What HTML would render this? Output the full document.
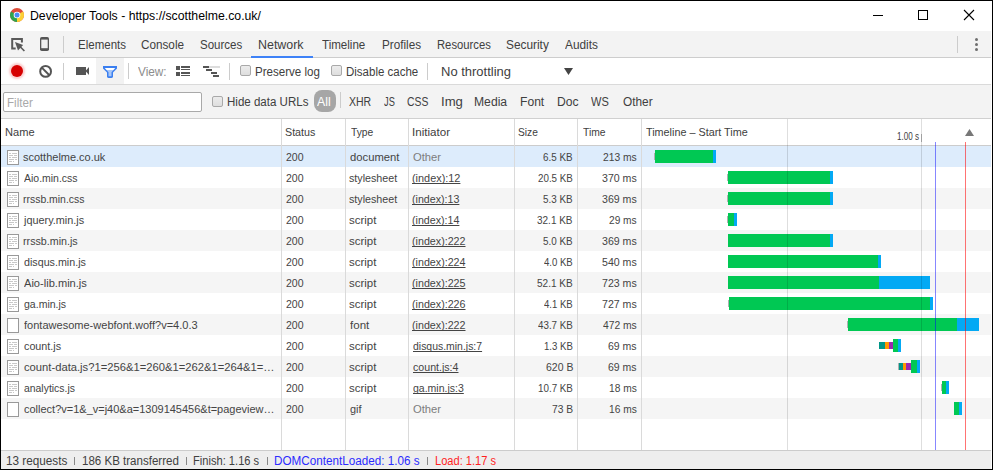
<!DOCTYPE html>
<html><head><meta charset="utf-8">
<style>
html,body{margin:0;padding:0;width:993px;height:470px;overflow:hidden;background:#fff;}
body{position:relative;font-family:"Liberation Sans",sans-serif;}
div,svg{position:absolute;box-sizing:border-box;}
.t{white-space:pre;line-height:16px;transform-origin:0 0;}
.r{left:1px;width:990px;height:21px;}
.bar{}
.ic{}
.vl{width:1px;}
.hl{height:1px;}
</style></head><body>
<!-- title bar -->
<div style="left:0;top:0;width:993px;height:31px;background:#fff"></div>
<svg style="left:10px;top:8px" width="14" height="14" viewBox="0 0 14 14">
  <circle cx="7" cy="7" r="7" fill="#dd4b39"/>
  <path d="M7 7 L13.06 3.5 A7 7 0 0 1 7 14 Z" fill="#fcd035"/>
  <path d="M7 7 L7 14 A7 7 0 0 1 0.94 3.5 Z" fill="#2fa44f"/>
  <circle cx="7" cy="7" r="3.3" fill="#fff"/>
  <circle cx="7" cy="7" r="2.5" fill="#4c8bf5"/>
</svg>
<!-- window controls -->
<div class="hl" style="left:873px;top:15px;width:10px;background:#000"></div>
<div style="left:918px;top:10px;width:10px;height:10px;border:1px solid #000"></div>
<svg style="left:963px;top:9px" width="12" height="12" viewBox="0 0 12 12"><path d="M1 1L11 11M11 1L1 11" stroke="#000" stroke-width="1.1"/></svg>

<!-- tab bar -->
<div style="left:1px;top:31px;width:990px;height:27px;background:#f3f3f3;border-bottom:1px solid #cdcdcd"></div>
<svg style="left:8px;top:34px" width="20" height="20" viewBox="0 0 20 20">
  <path d="M7.7 14.5H4.2V5H13.9V8.5" fill="none" stroke="#595959" stroke-width="2"/>
  <path d="M7 8L15.1 11L10 16.4Z" fill="#595959"/>
  <path d="M12 12.5L16.4 17" stroke="#595959" stroke-width="1.6"/>
</svg>
<svg style="left:40px;top:37px" width="9" height="14" viewBox="0 0 9 14"><rect x="0" y="0" width="9" height="14" rx="1.8" fill="#555"/><rect x="1.3" y="2.6" width="6.4" height="8.6" fill="#efefef"/></svg>
<div class="vl" style="left:63px;top:36px;height:17px;background:#ccc"></div>
<div class="hl" style="left:251px;top:56px;width:62px;height:2px;background:#3e82f7"></div>
<div class="vl" style="left:957px;top:36px;height:17px;background:#ccc"></div>
<div style="left:975px;top:38px;width:3px;height:3px;border-radius:50%;background:#6e6e6e"></div>
<div style="left:975px;top:43px;width:3px;height:3px;border-radius:50%;background:#6e6e6e"></div>
<div style="left:975px;top:48px;width:3px;height:3px;border-radius:50%;background:#6e6e6e"></div>

<!-- toolbar -->
<div style="left:1px;top:58px;width:990px;height:27px;background:#fff;border-bottom:1px solid #dadada"></div>
<div style="left:11px;top:65px;width:12px;height:12px;border-radius:50%;background:#d60000;box-shadow:0 0 2px 2px rgba(240,110,110,0.35)"></div>
<svg style="left:38px;top:64px" width="15" height="15" viewBox="0 0 15 15"><circle cx="7.6" cy="7.4" r="5.4" fill="none" stroke="#555" stroke-width="2"/><path d="M3.8 3.6L11.4 11.2" stroke="#555" stroke-width="2"/></svg>
<div class="vl" style="left:63px;top:63px;height:17px;background:#ccc"></div>
<svg style="left:76px;top:66px" width="14" height="10" viewBox="0 0 14 10"><rect x="0" y="1" width="10" height="8" fill="#555"/><path d="M9.5 5L13 0.9V9.1Z" fill="#555"/></svg>
<div style="left:96px;top:58px;width:28px;height:26px;background:#f2f2f2"></div>
<svg style="left:102px;top:65px" width="16" height="14" viewBox="0 0 16 14"><path d="M1 1H15V3.6L11 7.6V11.4Q11 12.9 8 12.9Q5 12.9 5 11.4V7.6L1 3.6Z" fill="#3b7ff0"/><path d="M2.8 3H13.2L11.5 5H4.5Z" fill="#fff"/><path d="M4.5 5H11.5L9.5 7.3V11.2H6.5V7.3Z" fill="#a9c7f7"/></svg>
<div class="vl" style="left:128px;top:63px;height:16px;background:#ccc"></div>
<svg style="left:176px;top:66px" width="14" height="10" viewBox="0 0 14 10"><path d="M0 0h4v4H0zM5 0h9v2H5zM5 3h9v1H5zM0 6h4v4H0zM5 6h9v2H5zM5 9h9v1H5z" fill="#555"/></svg>
<svg style="left:203px;top:66px" width="18" height="11" viewBox="0 0 18 11"><path d="M6 0h11v2H6z" fill="#ddd"/><path d="M0 0h6v2H0zM3 3h6v2H3zM8 6h6v2H8zM10 9h6v2h-6z" fill="#555"/></svg>
<div class="vl" style="left:229px;top:63px;height:17px;background:#ccc"></div>
<div style="left:240px;top:65px;width:11px;height:11px;border:1px solid #a9a9a9;border-radius:2px;background:linear-gradient(#ececec,#dedede)"></div>
<div style="left:331px;top:65px;width:11px;height:11px;border:1px solid #a9a9a9;border-radius:2px;background:linear-gradient(#ececec,#dedede)"></div>
<div class="vl" style="left:427px;top:63px;height:17px;background:#ccc"></div>
<svg style="left:564px;top:68px" width="9" height="7" viewBox="0 0 9 7"><path d="M0 0H9L4.5 7Z" fill="#444"/></svg>

<!-- filter bar -->
<div style="left:1px;top:85px;width:990px;height:34px;background:#f3f3f3;border-bottom:1px solid #d0d0d0"></div>
<div style="left:3px;top:92px;width:199px;height:20px;background:#fff;border:1px solid #a9a9a9;border-radius:2px"></div>
<div style="left:212px;top:96px;width:11px;height:11px;border:1px solid #a9a9a9;border-radius:2px;background:linear-gradient(#ececec,#dedede)"></div>
<div style="left:314px;top:90px;width:22px;height:22px;border-radius:8px;background:#a6a6a6"></div>
<div class="vl" style="left:340px;top:92px;height:16px;background:#ccc"></div>

<!-- header -->
<div style="left:1px;top:119px;width:990px;height:27px;background:#fff;border-bottom:1px solid #ccc"></div>

<div class="r" style="top:146px;background:#ddecfc"></div>
<svg class="ic" style="left:7px;top:150px" width="12" height="15" viewBox="0 0 12 15"><rect x="0.5" y="0.5" width="11" height="14" fill="#fff" stroke="#999"/><path d="M2 3.5h2M5 3.5h5M2 5.5h4M7 5.5h3M2 7.5h2M5 7.5h5M2 9.5h5M8 9.5h2M2 11.5h3M6 11.5h1" stroke="#c9c9c9" stroke-width="1"/></svg>
<div class="bar" style="left:654px;top:153px;width:1px;height:7px;background:#b0b0b0"></div>
<div class="bar" style="left:655px;top:150px;width:58px;height:13px;background:#00c853"></div>
<div class="bar" style="left:713px;top:150px;width:3px;height:13px;background:#03a9f4"></div>
<div class="r" style="top:167px;background:#ffffff"></div>
<svg class="ic" style="left:7px;top:171px" width="12" height="15" viewBox="0 0 12 15"><rect x="0.5" y="0.5" width="11" height="14" fill="#fff" stroke="#999"/><path d="M2 3.5h2M5 3.5h5M2 5.5h4M7 5.5h3M2 7.5h2M5 7.5h5M2 9.5h5M8 9.5h2M2 11.5h3M6 11.5h1" stroke="#c9c9c9" stroke-width="1"/></svg>
<div class="bar" style="left:727px;top:174px;width:1px;height:7px;background:#b0b0b0"></div>
<div class="bar" style="left:728px;top:171px;width:102px;height:13px;background:#00c853"></div>
<div class="bar" style="left:830px;top:171px;width:3px;height:13px;background:#03a9f4"></div>
<div class="r" style="top:188px;background:#f5f5f5"></div>
<svg class="ic" style="left:7px;top:192px" width="12" height="15" viewBox="0 0 12 15"><rect x="0.5" y="0.5" width="11" height="14" fill="#fff" stroke="#999"/><path d="M2 3.5h2M5 3.5h5M2 5.5h4M7 5.5h3M2 7.5h2M5 7.5h5M2 9.5h5M8 9.5h2M2 11.5h3M6 11.5h1" stroke="#c9c9c9" stroke-width="1"/></svg>
<div class="bar" style="left:727px;top:195px;width:1px;height:7px;background:#b0b0b0"></div>
<div class="bar" style="left:728px;top:192px;width:102px;height:13px;background:#00c853"></div>
<div class="bar" style="left:830px;top:192px;width:3px;height:13px;background:#03a9f4"></div>
<div class="r" style="top:209px;background:#ffffff"></div>
<svg class="ic" style="left:7px;top:213px" width="12" height="15" viewBox="0 0 12 15"><rect x="0.5" y="0.5" width="11" height="14" fill="#fff" stroke="#999"/><path d="M2 3.5h2M5 3.5h5M2 5.5h4M7 5.5h3M2 7.5h2M5 7.5h5M2 9.5h5M8 9.5h2M2 11.5h3M6 11.5h1" stroke="#c9c9c9" stroke-width="1"/></svg>
<div class="bar" style="left:727px;top:216px;width:1px;height:7px;background:#b0b0b0"></div>
<div class="bar" style="left:728px;top:213px;width:6px;height:13px;background:#00c853"></div>
<div class="bar" style="left:734px;top:213px;width:3px;height:13px;background:#03a9f4"></div>
<div class="r" style="top:230px;background:#f5f5f5"></div>
<svg class="ic" style="left:7px;top:234px" width="12" height="15" viewBox="0 0 12 15"><rect x="0.5" y="0.5" width="11" height="14" fill="#fff" stroke="#999"/><path d="M2 3.5h2M5 3.5h5M2 5.5h4M7 5.5h3M2 7.5h2M5 7.5h5M2 9.5h5M8 9.5h2M2 11.5h3M6 11.5h1" stroke="#c9c9c9" stroke-width="1"/></svg>
<div class="bar" style="left:728px;top:234px;width:102px;height:13px;background:#00c853"></div>
<div class="bar" style="left:830px;top:234px;width:3px;height:13px;background:#03a9f4"></div>
<div class="r" style="top:251px;background:#ffffff"></div>
<svg class="ic" style="left:7px;top:255px" width="12" height="15" viewBox="0 0 12 15"><rect x="0.5" y="0.5" width="11" height="14" fill="#fff" stroke="#999"/><path d="M2 3.5h2M5 3.5h5M2 5.5h4M7 5.5h3M2 7.5h2M5 7.5h5M2 9.5h5M8 9.5h2M2 11.5h3M6 11.5h1" stroke="#c9c9c9" stroke-width="1"/></svg>
<div class="bar" style="left:728px;top:255px;width:150px;height:13px;background:#00c853"></div>
<div class="bar" style="left:878px;top:255px;width:3px;height:13px;background:#03a9f4"></div>
<div class="r" style="top:272px;background:#f5f5f5"></div>
<svg class="ic" style="left:7px;top:276px" width="12" height="15" viewBox="0 0 12 15"><rect x="0.5" y="0.5" width="11" height="14" fill="#fff" stroke="#999"/><path d="M2 3.5h2M5 3.5h5M2 5.5h4M7 5.5h3M2 7.5h2M5 7.5h5M2 9.5h5M8 9.5h2M2 11.5h3M6 11.5h1" stroke="#c9c9c9" stroke-width="1"/></svg>
<div class="bar" style="left:728px;top:276px;width:151px;height:13px;background:#00c853"></div>
<div class="bar" style="left:879px;top:276px;width:51px;height:13px;background:#03a9f4"></div>
<div class="r" style="top:293px;background:#ffffff"></div>
<svg class="ic" style="left:7px;top:297px" width="12" height="15" viewBox="0 0 12 15"><rect x="0.5" y="0.5" width="11" height="14" fill="#fff" stroke="#999"/><path d="M2 3.5h2M5 3.5h5M2 5.5h4M7 5.5h3M2 7.5h2M5 7.5h5M2 9.5h5M8 9.5h2M2 11.5h3M6 11.5h1" stroke="#c9c9c9" stroke-width="1"/></svg>
<div class="bar" style="left:728px;top:300px;width:1px;height:7px;background:#b0b0b0"></div>
<div class="bar" style="left:729px;top:297px;width:201px;height:13px;background:#00c853"></div>
<div class="bar" style="left:930px;top:297px;width:3px;height:13px;background:#03a9f4"></div>
<div class="r" style="top:314px;background:#f5f5f5"></div>
<svg class="ic" style="left:7px;top:318px" width="12" height="15" viewBox="0 0 12 15"><rect x="0.5" y="0.5" width="11" height="14" fill="#fff" stroke="#999"/></svg>
<div class="bar" style="left:847px;top:321px;width:1px;height:7px;background:#b0b0b0"></div>
<div class="bar" style="left:848px;top:318px;width:109px;height:13px;background:#00c853"></div>
<div class="bar" style="left:957px;top:318px;width:22px;height:13px;background:#03a9f4"></div>
<div class="r" style="top:335px;background:#ffffff"></div>
<svg class="ic" style="left:7px;top:339px" width="12" height="15" viewBox="0 0 12 15"><rect x="0.5" y="0.5" width="11" height="14" fill="#fff" stroke="#999"/><path d="M2 3.5h2M5 3.5h5M2 5.5h4M7 5.5h3M2 7.5h2M5 7.5h5M2 9.5h5M8 9.5h2M2 11.5h3M6 11.5h1" stroke="#c9c9c9" stroke-width="1"/></svg>
<div class="bar" style="left:879px;top:342px;width:6px;height:7px;background:#009688"></div>
<div class="bar" style="left:885px;top:342px;width:4px;height:7px;background:#ff9800"></div>
<div class="bar" style="left:889px;top:342px;width:4px;height:7px;background:#9c27b0"></div>
<div class="bar" style="left:893px;top:339px;width:5px;height:13px;background:#00c853"></div>
<div class="bar" style="left:898px;top:339px;width:3px;height:13px;background:#03a9f4"></div>
<div class="r" style="top:356px;background:#f5f5f5"></div>
<svg class="ic" style="left:7px;top:360px" width="12" height="15" viewBox="0 0 12 15"><rect x="0.5" y="0.5" width="11" height="14" fill="#fff" stroke="#999"/><path d="M2 3.5h2M5 3.5h5M2 5.5h4M7 5.5h3M2 7.5h2M5 7.5h5M2 9.5h5M8 9.5h2M2 11.5h3M6 11.5h1" stroke="#c9c9c9" stroke-width="1"/></svg>
<div class="bar" style="left:898px;top:363px;width:1px;height:7px;background:#b0b0b0"></div>
<div class="bar" style="left:899px;top:363px;width:4px;height:7px;background:#009688"></div>
<div class="bar" style="left:903px;top:363px;width:3px;height:7px;background:#ff9800"></div>
<div class="bar" style="left:906px;top:363px;width:5px;height:7px;background:#9c27b0"></div>
<div class="bar" style="left:911px;top:360px;width:6px;height:13px;background:#00c853"></div>
<div class="bar" style="left:917px;top:360px;width:3px;height:13px;background:#03a9f4"></div>
<div class="r" style="top:377px;background:#ffffff"></div>
<svg class="ic" style="left:7px;top:381px" width="12" height="15" viewBox="0 0 12 15"><rect x="0.5" y="0.5" width="11" height="14" fill="#fff" stroke="#999"/><path d="M2 3.5h2M5 3.5h5M2 5.5h4M7 5.5h3M2 7.5h2M5 7.5h5M2 9.5h5M8 9.5h2M2 11.5h3M6 11.5h1" stroke="#c9c9c9" stroke-width="1"/></svg>
<div class="bar" style="left:941px;top:384px;width:1px;height:7px;background:#b0b0b0"></div>
<div class="bar" style="left:942px;top:381px;width:4px;height:13px;background:#00c853"></div>
<div class="bar" style="left:946px;top:381px;width:3px;height:13px;background:#03a9f4"></div>
<div class="r" style="top:398px;background:#f5f5f5"></div>
<svg class="ic" style="left:7px;top:402px" width="12" height="15" viewBox="0 0 12 15"><rect x="0.5" y="0.5" width="11" height="14" fill="#fff" stroke="#999"/></svg>
<div class="bar" style="left:954px;top:402px;width:5px;height:13px;background:#00c853"></div>
<div class="bar" style="left:959px;top:402px;width:3px;height:13px;background:#03a9f4"></div>

<!-- column dividers -->
<div class="vl" style="left:281px;top:119px;height:331px;background:#dadada"></div>
<div class="vl" style="left:345px;top:119px;height:331px;background:#dadada"></div>
<div class="vl" style="left:408px;top:119px;height:331px;background:#dadada"></div>
<div class="vl" style="left:514px;top:119px;height:331px;background:#dadada"></div>
<div class="vl" style="left:577px;top:119px;height:331px;background:#dadada"></div>
<div class="vl" style="left:641px;top:119px;height:331px;background:#dadada"></div>
<div class="vl" style="left:787px;top:119px;height:331px;background:rgba(0,0,0,0.13)"></div>
<div class="vl" style="left:921px;top:119px;height:331px;background:rgba(0,0,0,0.13)"></div>
<div class="vl" style="left:935px;top:142px;height:308px;background:rgba(0,0,255,0.47)"></div>
<div class="vl" style="left:965px;top:142px;height:308px;background:rgba(255,0,0,0.55)"></div>
<div class="vl" style="left:921px;top:134px;height:8px;background:#a0a0a0"></div>
<svg style="left:965px;top:129px" width="9" height="7" viewBox="0 0 9 7"><path d="M4.5 0L9 7H0Z" fill="#777"/></svg>

<!-- status bar -->
<div style="left:1px;top:450px;width:990px;height:19px;background:#eee;border-top:1px solid #ccc"></div>
<div class="vl" style="left:74px;top:457px;height:8px;background:#888"></div>
<div class="vl" style="left:186px;top:457px;height:8px;background:#888"></div>
<div class="vl" style="left:267px;top:457px;height:8px;background:#888"></div>
<div class="vl" style="left:427px;top:457px;height:8px;background:#888"></div>

<div class="t" style="left:29.98px;top:8.00px;font-size:12px;color:#000;transform:scaleX(1.0222);">Developer Tools - https://scotthelme.co.uk/</div>
<div class="t" style="left:77.54px;top:37.00px;font-size:12px;color:#404040;transform:scaleX(0.9592);">Elements</div>
<div class="t" style="left:141.02px;top:37.00px;font-size:12px;color:#404040;transform:scaleX(0.9767);">Console</div>
<div class="t" style="left:200.04px;top:37.00px;font-size:12px;color:#404040;transform:scaleX(0.9605);">Sources</div>
<div class="t" style="left:258.47px;top:37.00px;font-size:12px;color:#404040;transform:scaleX(1.0349);">Network</div>
<div class="t" style="left:321.60px;top:37.00px;font-size:12px;color:#404040;transform:scaleX(0.9644);">Timeline</div>
<div class="t" style="left:381.62px;top:37.00px;font-size:12px;color:#404040;transform:scaleX(0.9769);">Profiles</div>
<div class="t" style="left:436.56px;top:37.00px;font-size:12px;color:#404040;transform:scaleX(0.9375);">Resources</div>
<div class="t" style="left:506.01px;top:37.00px;font-size:12px;color:#404040;transform:scaleX(0.9881);">Security</div>
<div class="t" style="left:565.40px;top:37.00px;font-size:12px;color:#404040;transform:scaleX(0.9879);">Audits</div>
<div class="t" style="left:138.00px;top:64.00px;font-size:12px;color:#8c8c8c;transform:scaleX(0.9821);">View:</div>
<div class="t" style="left:254.64px;top:64.00px;font-size:12px;color:#404040;transform:scaleX(0.9636);">Preserve log</div>
<div class="t" style="left:345.84px;top:64.00px;font-size:12px;color:#404040;transform:scaleX(0.9581);">Disable cache</div>
<div class="t" style="left:440.72px;top:64.00px;font-size:12px;color:#404040;transform:scaleX(1.0825);">No throttling</div>
<div class="t" style="left:7.03px;top:95.00px;font-size:12px;color:#a9a9a9;transform:scaleX(0.9654);">Filter</div>
<div class="t" style="left:226.74px;top:94.00px;font-size:12px;color:#404040;transform:scaleX(0.9614);">Hide data URLs</div>
<div class="t" style="left:316.90px;top:94.00px;font-size:12px;color:#fff;transform:scaleX(1.0231);">All</div>
<div class="t" style="left:348.80px;top:94.00px;font-size:12px;color:#404040;transform:scaleX(0.8760);">XHR</div>
<div class="t" style="left:383.80px;top:94.00px;font-size:12px;color:#404040;transform:scaleX(0.7714);">JS</div>
<div class="t" style="left:407.13px;top:94.00px;font-size:12px;color:#404040;transform:scaleX(0.8652);">CSS</div>
<div class="t" style="left:440.51px;top:94.00px;font-size:12px;color:#404040;transform:scaleX(1.0944);">Img</div>
<div class="t" style="left:474.19px;top:94.00px;font-size:12px;color:#404040;transform:scaleX(1.0125);">Media</div>
<div class="t" style="left:520.09px;top:94.00px;font-size:12px;color:#404040;transform:scaleX(1.0087);">Font</div>
<div class="t" style="left:557.09px;top:94.00px;font-size:12px;color:#404040;transform:scaleX(1.0100);">Doc</div>
<div class="t" style="left:591.40px;top:94.00px;font-size:12px;color:#404040;transform:scaleX(0.9211);">WS</div>
<div class="t" style="left:622.60px;top:94.00px;font-size:12px;color:#404040;transform:scaleX(0.9867);">Other</div>
<div class="t" style="left:4.59px;top:124.00px;font-size:11px;color:#404040;transform:scaleX(1.0071);">Name</div>
<div class="t" style="left:285.33px;top:124.00px;font-size:11px;color:#404040;transform:scaleX(0.9733);">Status</div>
<div class="t" style="left:350.50px;top:124.00px;font-size:11px;color:#404040;transform:scaleX(0.9333);">Type</div>
<div class="t" style="left:412.45px;top:124.00px;font-size:11px;color:#404040;transform:scaleX(1.0543);">Initiator</div>
<div class="t" style="left:518.37px;top:124.00px;font-size:11px;color:#404040;transform:scaleX(0.9300);">Size</div>
<div class="t" style="left:582.60px;top:124.00px;font-size:11px;color:#404040;transform:scaleX(0.9375);">Time</div>
<div class="t" style="left:646.00px;top:124.00px;font-size:11px;color:#404040;transform:scaleX(0.9825);">Timeline – Start Time</div>
<div class="t" style="left:896.99px;top:128.60px;font-size:10px;color:#404040;transform:scaleX(0.8077);">1.00 s</div>
<div class="t" style="left:23.10px;top:149.00px;font-size:11px;color:#444;transform:scaleX(0.9975);">scotthelme.co.uk</div>
<div class="t" style="left:286.30px;top:149.00px;font-size:11px;color:#444;transform:scaleX(0.9556);">200</div>
<div class="t" style="left:350.20px;top:149.00px;font-size:11px;color:#444;transform:scaleX(1.0229);">document</div>
<div class="t" style="left:413.10px;top:149.00px;font-size:11px;color:#7d7d7d;transform:scaleX(1.0185);">Other</div>
<div class="t" style="left:543.10px;top:149.00px;font-size:11px;color:#444;transform:scaleX(0.8969);">6.5 KB</div>
<div class="t" style="left:602.80px;top:149.00px;font-size:11px;color:#444;transform:scaleX(0.9361);">213 ms</div>
<div class="t" style="left:24.10px;top:170.00px;font-size:11px;color:#444;transform:scaleX(0.9518);">Aio.min.css</div>
<div class="t" style="left:286.30px;top:170.00px;font-size:11px;color:#444;transform:scaleX(0.9556);">200</div>
<div class="t" style="left:349.23px;top:170.00px;font-size:11px;color:#444;transform:scaleX(0.9735);">stylesheet</div>
<div class="t" style="left:412.11px;top:170.00px;font-size:11px;color:#444;transform:scaleX(0.9894);text-decoration:underline;text-decoration-skip-ink:none;">(index):12</div>
<div class="t" style="left:538.00px;top:170.00px;font-size:11px;color:#444;transform:scaleX(0.8897);">20.5 KB</div>
<div class="t" style="left:601.84px;top:170.00px;font-size:11px;color:#444;transform:scaleX(0.9629);">370 ms</div>
<div class="t" style="left:23.15px;top:191.00px;font-size:11px;color:#444;transform:scaleX(0.9484);">rrssb.min.css</div>
<div class="t" style="left:286.30px;top:191.00px;font-size:11px;color:#444;transform:scaleX(0.9556);">200</div>
<div class="t" style="left:349.23px;top:191.00px;font-size:11px;color:#444;transform:scaleX(0.9735);">stylesheet</div>
<div class="t" style="left:412.13px;top:191.00px;font-size:11px;color:#444;transform:scaleX(0.9688);text-decoration:underline;text-decoration-skip-ink:none;">(index):13</div>
<div class="t" style="left:543.10px;top:191.00px;font-size:11px;color:#444;transform:scaleX(0.8969);">5.3 KB</div>
<div class="t" style="left:601.84px;top:191.00px;font-size:11px;color:#444;transform:scaleX(0.9629);">369 ms</div>
<div class="t" style="left:24.10px;top:212.00px;font-size:11px;color:#444;transform:scaleX(0.9869);">jquery.min.js</div>
<div class="t" style="left:286.30px;top:212.00px;font-size:11px;color:#444;transform:scaleX(0.9556);">200</div>
<div class="t" style="left:349.16px;top:212.00px;font-size:11px;color:#444;transform:scaleX(1.0440);">script</div>
<div class="t" style="left:412.13px;top:212.00px;font-size:11px;color:#444;transform:scaleX(0.9688);text-decoration:underline;text-decoration-skip-ink:none;">(index):14</div>
<div class="t" style="left:537.29px;top:212.00px;font-size:11px;color:#444;transform:scaleX(0.9079);">32.1 KB</div>
<div class="t" style="left:608.80px;top:212.00px;font-size:11px;color:#444;transform:scaleX(0.9233);">29 ms</div>
<div class="t" style="left:23.13px;top:233.00px;font-size:11px;color:#444;transform:scaleX(0.9727);">rrssb.min.js</div>
<div class="t" style="left:286.30px;top:233.00px;font-size:11px;color:#444;transform:scaleX(0.9556);">200</div>
<div class="t" style="left:349.16px;top:233.00px;font-size:11px;color:#444;transform:scaleX(1.0440);">script</div>
<div class="t" style="left:412.13px;top:233.00px;font-size:11px;color:#444;transform:scaleX(0.9722);text-decoration:underline;text-decoration-skip-ink:none;">(index):222</div>
<div class="t" style="left:543.10px;top:233.00px;font-size:11px;color:#444;transform:scaleX(0.8969);">5.0 KB</div>
<div class="t" style="left:601.84px;top:233.00px;font-size:11px;color:#444;transform:scaleX(0.9629);">369 ms</div>
<div class="t" style="left:24.10px;top:254.00px;font-size:11px;color:#444;transform:scaleX(0.9730);">disqus.min.js</div>
<div class="t" style="left:286.30px;top:254.00px;font-size:11px;color:#444;transform:scaleX(0.9556);">200</div>
<div class="t" style="left:349.16px;top:254.00px;font-size:11px;color:#444;transform:scaleX(1.0440);">script</div>
<div class="t" style="left:412.13px;top:254.00px;font-size:11px;color:#444;transform:scaleX(0.9722);text-decoration:underline;text-decoration-skip-ink:none;">(index):224</div>
<div class="t" style="left:544.00px;top:254.00px;font-size:11px;color:#444;transform:scaleX(0.8697);">4.0 KB</div>
<div class="t" style="left:601.84px;top:254.00px;font-size:11px;color:#444;transform:scaleX(0.9629);">540 ms</div>
<div class="t" style="left:24.10px;top:275.00px;font-size:11px;color:#444;transform:scaleX(1.0081);">Aio-lib.min.js</div>
<div class="t" style="left:286.30px;top:275.00px;font-size:11px;color:#444;transform:scaleX(0.9556);">200</div>
<div class="t" style="left:349.16px;top:275.00px;font-size:11px;color:#444;transform:scaleX(1.0440);">script</div>
<div class="t" style="left:412.13px;top:275.00px;font-size:11px;color:#444;transform:scaleX(0.9722);text-decoration:underline;text-decoration-skip-ink:none;">(index):225</div>
<div class="t" style="left:537.09px;top:275.00px;font-size:11px;color:#444;transform:scaleX(0.9132);">52.1 KB</div>
<div class="t" style="left:601.84px;top:275.00px;font-size:11px;color:#444;transform:scaleX(0.9629);">723 ms</div>
<div class="t" style="left:24.10px;top:296.00px;font-size:11px;color:#444;transform:scaleX(0.9568);">ga.min.js</div>
<div class="t" style="left:286.30px;top:296.00px;font-size:11px;color:#444;transform:scaleX(0.9556);">200</div>
<div class="t" style="left:349.16px;top:296.00px;font-size:11px;color:#444;transform:scaleX(1.0440);">script</div>
<div class="t" style="left:412.13px;top:296.00px;font-size:11px;color:#444;transform:scaleX(0.9722);text-decoration:underline;text-decoration-skip-ink:none;">(index):226</div>
<div class="t" style="left:544.00px;top:296.00px;font-size:11px;color:#444;transform:scaleX(0.8697);">4.1 KB</div>
<div class="t" style="left:601.84px;top:296.00px;font-size:11px;color:#444;transform:scaleX(0.9629);">727 ms</div>
<div class="t" style="left:24.10px;top:317.00px;font-size:11px;color:#444;transform:scaleX(1.0029);">fontawesome-webfont.woff?v=4.0.3</div>
<div class="t" style="left:286.30px;top:317.00px;font-size:11px;color:#444;transform:scaleX(0.9556);">200</div>
<div class="t" style="left:350.20px;top:317.00px;font-size:11px;color:#444;transform:scaleX(1.0500);">font</div>
<div class="t" style="left:412.13px;top:317.00px;font-size:11px;color:#444;transform:scaleX(0.9722);text-decoration:underline;text-decoration-skip-ink:none;">(index):222</div>
<div class="t" style="left:538.00px;top:317.00px;font-size:11px;color:#444;transform:scaleX(0.8897);">43.7 KB</div>
<div class="t" style="left:602.80px;top:317.00px;font-size:11px;color:#444;transform:scaleX(0.9361);">472 ms</div>
<div class="t" style="left:24.10px;top:338.00px;font-size:11px;color:#444;transform:scaleX(0.9789);">count.js</div>
<div class="t" style="left:286.30px;top:338.00px;font-size:11px;color:#444;transform:scaleX(0.9556);">200</div>
<div class="t" style="left:349.16px;top:338.00px;font-size:11px;color:#444;transform:scaleX(1.0440);">script</div>
<div class="t" style="left:413.10px;top:338.00px;font-size:11px;color:#444;transform:scaleX(0.9493);text-decoration:underline;text-decoration-skip-ink:none;">disqus.min.js:7</div>
<div class="t" style="left:543.83px;top:338.00px;font-size:11px;color:#444;transform:scaleX(0.8750);">1.3 KB</div>
<div class="t" style="left:607.84px;top:338.00px;font-size:11px;color:#444;transform:scaleX(0.9552);">69 ms</div>
<div class="t" style="left:24.10px;top:359.00px;font-size:11px;color:#444;transform:scaleX(1.0197);">count-data.js?1=256&amp;1=260&amp;1=262&amp;1=264&amp;1=…</div>
<div class="t" style="left:286.30px;top:359.00px;font-size:11px;color:#444;transform:scaleX(0.9556);">200</div>
<div class="t" style="left:349.16px;top:359.00px;font-size:11px;color:#444;transform:scaleX(1.0440);">script</div>
<div class="t" style="left:413.10px;top:359.00px;font-size:11px;color:#444;transform:scaleX(0.9660);text-decoration:underline;text-decoration-skip-ink:none;">count.js:4</div>
<div class="t" style="left:546.05px;top:359.00px;font-size:11px;color:#444;transform:scaleX(0.9519);">620 B</div>
<div class="t" style="left:607.95px;top:359.00px;font-size:11px;color:#444;transform:scaleX(0.9517);">69 ms</div>
<div class="t" style="left:24.10px;top:380.00px;font-size:11px;color:#444;transform:scaleX(0.9463);">analytics.js</div>
<div class="t" style="left:286.30px;top:380.00px;font-size:11px;color:#444;transform:scaleX(0.9556);">200</div>
<div class="t" style="left:349.16px;top:380.00px;font-size:11px;color:#444;transform:scaleX(1.0440);">script</div>
<div class="t" style="left:413.10px;top:380.00px;font-size:11px;color:#444;transform:scaleX(0.9547);text-decoration:underline;text-decoration-skip-ink:none;">ga.min.js:3</div>
<div class="t" style="left:537.91px;top:380.00px;font-size:11px;color:#444;transform:scaleX(0.8921);">10.7 KB</div>
<div class="t" style="left:608.67px;top:380.00px;font-size:11px;color:#444;transform:scaleX(0.9276);">18 ms</div>
<div class="t" style="left:24.10px;top:401.00px;font-size:11px;color:#444;transform:scaleX(0.9992);">collect?v=1&amp;_v=j40&amp;a=1309145456&amp;t=pageview…</div>
<div class="t" style="left:286.30px;top:401.00px;font-size:11px;color:#444;transform:scaleX(0.9556);">200</div>
<div class="t" style="left:350.20px;top:401.00px;font-size:11px;color:#444;transform:scaleX(0.9917);">gif</div>
<div class="t" style="left:413.10px;top:401.00px;font-size:11px;color:#7d7d7d;transform:scaleX(1.0185);">Other</div>
<div class="t" style="left:552.17px;top:401.00px;font-size:11px;color:#444;transform:scaleX(0.9333);">73 B</div>
<div class="t" style="left:608.67px;top:401.00px;font-size:11px;color:#444;transform:scaleX(0.9276);">16 ms</div>
<div class="t" style="left:6.02px;top:453.30px;font-size:12px;color:#404040;transform:scaleX(0.9787);">13 requests</div>
<div class="t" style="left:81.64px;top:453.30px;font-size:12px;color:#404040;transform:scaleX(0.9616);">186 KB transferred</div>
<div class="t" style="left:193.37px;top:453.30px;font-size:12px;color:#404040;transform:scaleX(0.9271);">Finish: 1.16 s</div>
<div class="t" style="left:274.33px;top:453.30px;font-size:12px;color:#2b2bff;transform:scaleX(0.9736);">DOMContentLoaded: 1.06 s</div>
<div class="t" style="left:434.68px;top:453.30px;font-size:12px;color:#ff1f1f;transform:scaleX(0.9246);">Load: 1.17 s</div>

<!-- window border -->
<div style="left:0;top:0;width:993px;height:470px;border:1px solid #000;border-bottom-width:1px;pointer-events:none"></div>
</body></html>
